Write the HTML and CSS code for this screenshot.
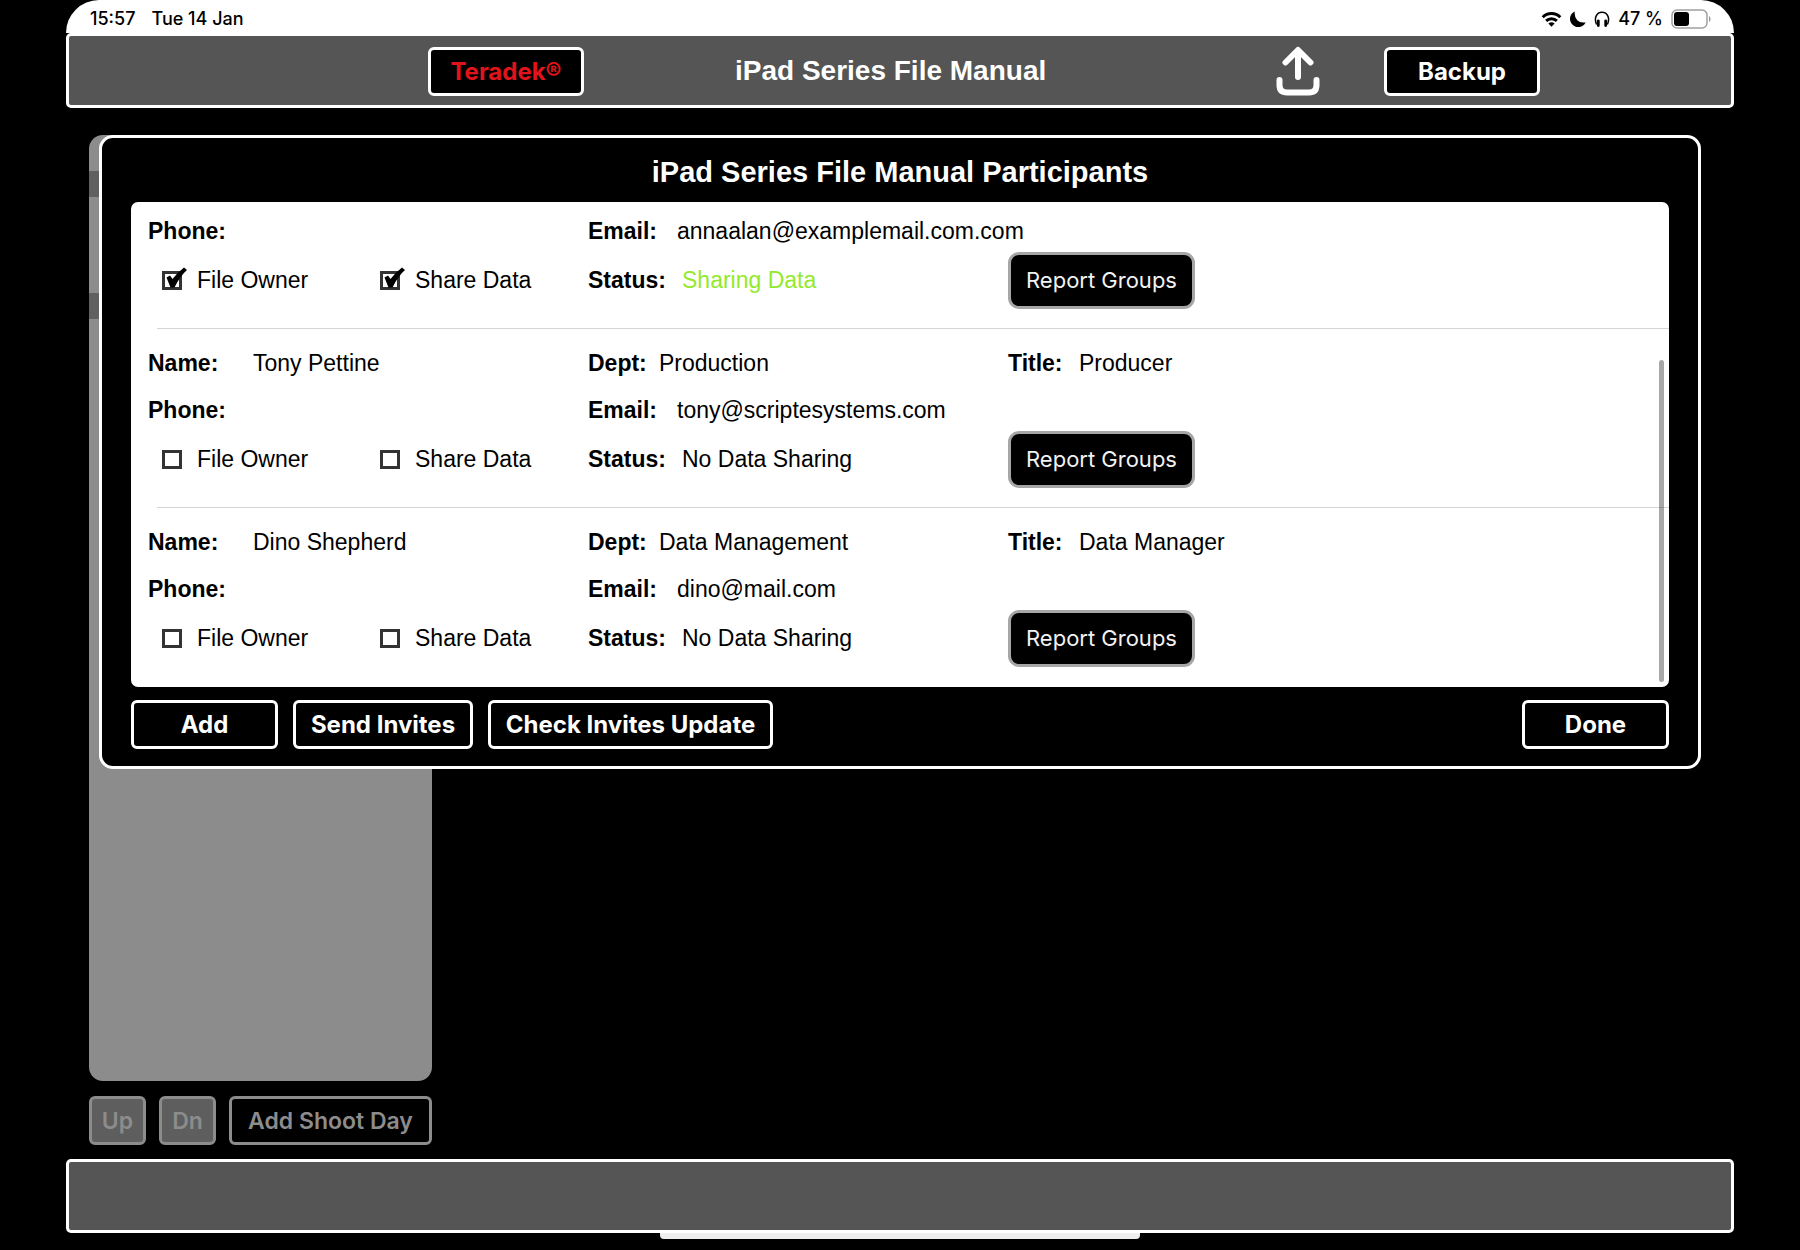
FILE: index.html
```html
<!DOCTYPE html>
<html lang="en">
<head>
    <meta charset="UTF-8">
    <meta name="viewport" content="width=device-width, initial-scale=1.0">
    <title>iPad Series File Manual</title>
    <link rel="stylesheet" href="styles.css">
</head>
<body>
    <div class="status-bar">
        <span class="time">15:57</span>
        <span class="date">Tue 14 Jan</span>
        <div class="status-icons">
            <svg width="21" height="16" viewBox="0 0 20 16" fill="none" stroke="#000" stroke-width="3">
                <path d="M1.2 6.2a12.5 12.5 0 0 1 17.6 0"/>
                <path d="M4.6 9.9a7.7 7.7 0 0 1 10.8 0"/>
                <path d="M10 15.8 6.9 12.6a4.5 4.5 0 0 1 6.2 0z" fill="#000" stroke="none"/>
            </svg>
            <svg width="16" height="16" viewBox="0 0 16 16">
                <path d="M4.800 .4A8.200 8.200 0 1 0 15.600 11.400 Q10 12.200 7.200 9.200 Q4 5.500 4.800 .4z"/>
            </svg>
            <svg width="16" height="16" viewBox="0 0 16 16" fill="none" stroke="#000">
                <path d="M2.600 13.500C-.2 7.500 2.300 1.300 8 1.300s8.200 6.200 5.400 12.200" stroke-width="1.500"/>
                <path d="M4.300 9.800v4.700M11.700 9.800v4.700" stroke-width="2.800" stroke-linecap="round"/>
            </svg>
            <span class="percent">47 %</span>
            <svg width="40" height="20" viewBox="0 0 40 20">
                <rect x="1" y="1" width="35" height="18" rx="5" fill="none" stroke="#a0a0a0" stroke-width="1.500"/>
                <rect x="3" y="3" width="15" height="14" rx="3"/>
                <path d="M38 7c2 1 2 5 0 6z" fill="#999"/>
            </svg>
        </div>
    </div>

    <header class="header">
        <button type="button" class="btn btn-teradek">Teradek®</button>
        <h1>iPad Series File Manual</h1>
        <button type="button" class="share-btn" aria-label="Share">
            <svg width="44" height="50" viewBox="0 0 44 50" fill="none" stroke="#fff" stroke-width="6" stroke-linecap="round" stroke-linejoin="round">
                <path d="M22 31V5M9.500 16.500 22 4l12.500 12.500"/>
                <path d="M3.500 34v5q0 7.500 7.500 7.500h22q7.500 0 7.500-7.500v-5"/>
            </svg>
        </button>
        <button type="button" class="btn btn-backup">Backup</button>
    </header>

    <main class="workspace">
        <aside class="sidebar">
            <div class="day-list">
                <div class="day-row"></div>
                <div class="day-row"></div>
            </div>
            <div class="sidebar-actions">
                <button type="button" class="btn btn-dim btn-move" disabled>Up</button>
                <button type="button" class="btn btn-dim btn-move" disabled>Dn</button>
                <button type="button" class="btn btn-dim btn-day">Add Shoot Day</button>
            </div>
        </aside>

        <section class="modal" role="dialog" aria-labelledby="modalTitle">
            <h2 id="modalTitle">iPad Series File Manual Participants</h2>

            <ul class="participants">
                <li>
                    <div class="fields fields-short">
                        <div class="field"><b>Phone:</b></div>
                        <div class="field wide"><b class="w-email">Email:</b>annaalan@examplemail.com.com</div>
                        <div class="checks">
                            <label><input type="checkbox" checked>File Owner</label>
                            <label><input type="checkbox" checked>Share Data</label>
                        </div>
                        <div class="field"><b class="w-status">Status:</b><span class="sharing">Sharing Data</span></div>
                        <button type="button" class="report-btn">Report Groups</button>
                    </div>
                </li>
                <li>
                    <div class="fields">
                        <div class="field"><b class="w-name">Name:</b>Tony Pettine</div>
                        <div class="field"><b class="w-dept">Dept:</b>Production</div>
                        <div class="field"><b class="w-dept">Title:</b>Producer</div>
                        <div class="field"><b>Phone:</b></div>
                        <div class="field wide"><b class="w-email">Email:</b>tony@scriptesystems.com</div>
                        <div class="checks">
                            <label><input type="checkbox">File Owner</label>
                            <label><input type="checkbox">Share Data</label>
                        </div>
                        <div class="field"><b class="w-status">Status:</b>No Data Sharing</div>
                        <button type="button" class="report-btn">Report Groups</button>
                    </div>
                </li>
                <li>
                    <div class="fields">
                        <div class="field"><b class="w-name">Name:</b>Dino Shepherd</div>
                        <div class="field"><b class="w-dept">Dept:</b>Data Management</div>
                        <div class="field"><b class="w-dept">Title:</b>Data Manager</div>
                        <div class="field"><b>Phone:</b></div>
                        <div class="field wide"><b class="w-email">Email:</b>dino@mail.com</div>
                        <div class="checks">
                            <label><input type="checkbox">File Owner</label>
                            <label><input type="checkbox">Share Data</label>
                        </div>
                        <div class="field"><b class="w-status">Status:</b>No Data Sharing</div>
                        <button type="button" class="report-btn">Report Groups</button>
                    </div>
                </li>
            </ul>

            <div class="modal-actions">
                <button type="button" class="btn btn-small">Add</button>
                <button type="button" class="btn btn-invites">Send Invites</button>
                <button type="button" class="btn btn-update">Check Invites Update</button>
                <button type="button" class="btn btn-small btn-done">Done</button>
            </div>
        </section>
    </main>

    <footer class="footer"></footer>
    <div class="home-indicator"></div>
</body>
</html>
```

FILE: styles.css
```css
* {
    margin: 0;
    padding: 0;
    box-sizing: border-box;
}

body {
    font-family: 'Liberation Sans', Arial, sans-serif;
    font-size: 23px;
    background: #000;
    color: #000;
    min-height: 100vh;
    padding: 0 66px 11px;
    display: flex;
    flex-direction: column;
}

/* Status bar */

.status-bar {
    height: 33px;
    padding: 4px 23px 0 24px;
    display: flex;
    align-items: center;
    gap: 16px;
    background: #fff;
    border-radius: 38px 38px 0 0;
    font-family: Inter, sans-serif;
    font-size: 18px;
    font-weight: 500;
}

.status-icons {
    margin-left: auto;
    display: flex;
    align-items: center;
    gap: 8px;
}

/* Top and bottom bars */

.header {
    height: 75px;
    padding-top: 1px;
    display: grid;
    grid-template-columns: 359fr 156px 151fr 306px 235fr 44px 64fr 156px 191fr;
    align-items: center;
    background: #555;
    border: 3px solid #fff;
    border-radius: 5px;
}

.header h1 {
    grid-column: 4;
    font-size: 28px;
    line-height: 32px;
    color: #fff;
    text-align: center;
    white-space: nowrap;
}

.share-btn {
    grid-column: 6;
    height: 50px;
    background: none;
    border: none;
}

.btn-teradek {
    grid-column: 2;
}

.btn-backup {
    grid-column: 8;
}

.footer {
    height: 74px;
    background: #555;
    border: 3px solid #fff;
    border-radius: 5px;
}

.home-indicator {
    width: 480px;
    height: 6px;
    align-self: center;
    background: #eee;
    border-radius: 0 0 4px 4px;
}

/* Buttons */

.btn {
    height: 49px;
    background: #000;
    color: #fff;
    border: 3px solid #fff;
    border-radius: 6px;
    font-family: Inter, sans-serif;
    font-size: 24px;
    font-weight: 700;
    white-space: nowrap;
}

.header .btn-teradek {
    color: #e0141a;
}

.btn-dim {
    color: #8c8c8c;
    border-color: #8c8c8c;
    font-size: 23px;
    font-weight: 600;
}

.btn-dim:disabled {
    background: #5e5e5e;
}

.btn-move {
    width: 57px;
}

.btn-day {
    flex: 1;
}

.btn-small {
    width: 147px;
}

.btn-invites {
    width: 180px;
}

.btn-update {
    width: 285px;
}

.btn-done {
    margin-left: auto;
}

/* Sidebar */

.workspace {
    position: relative;
    flex: 1;
    display: flex;
    padding: 27px 23px 14px;
}

.sidebar {
    width: 343px;
    display: flex;
    flex-direction: column;
    gap: 15px;
}

.day-list {
    flex: 1;
    padding-top: 36px;
    display: flex;
    flex-direction: column;
    gap: 96px;
    background: #8c8c8c;
    border-radius: 14px;
}

.day-row {
    height: 26px;
    background: #606060;
}

.sidebar-actions {
    display: flex;
    gap: 13px;
}

/* Participants dialog */

.modal {
    position: absolute;
    top: 27px;
    left: 33px;
    right: 33px;
    padding: 18px 29px 17px;
    background: #000;
    border: 3px solid #fff;
    border-radius: 14px;
}

.modal h2 {
    margin-bottom: 14px;
    font-size: 29px;
    line-height: 32px;
    color: #fff;
    text-align: center;
}

.participants {
    position: relative;
    padding-bottom: 1px;
    background: #fff;
    border-radius: 7px;
    list-style: none;
}

/* scroll thumb */
.participants::after {
    content: '';
    position: absolute;
    right: 5px;
    bottom: 5px;
    width: 5px;
    height: 322px;
    background: rgba(0, 0, 0, 0.34);
    border-radius: 3px;
}

.participants li {
    margin-left: 26px;
    border-bottom: 1px solid #d4d4d4;
}

.participants li:last-child {
    border-bottom: none;
}

.fields {
    margin-left: -9px;
    padding: 11px 0 23px;
    display: grid;
    grid-template-columns: 440px 420px 1fr;
    grid-template-rows: 47px 47px 50px;
    align-items: center;
}

.fields-short {
    padding-top: 5px;
    grid-template-rows: 48px 50px;
}

.field {
    display: flex;
    white-space: nowrap;
}

.wide {
    grid-column: span 2;
}

.w-name {
    width: 105px;
}

.w-dept {
    width: 71px;
}

.w-email {
    width: 89px;
}

.w-status {
    width: 94px;
}

.sharing {
    color: #93ea2c;
}

.checks {
    display: flex;
    padding-left: 13px;
}

.checks label {
    width: 218px;
    flex-shrink: 0;
    display: flex;
    align-items: center;
    gap: 10px;
}

.checks input {
    appearance: none;
    width: 26px;
    height: 26px;
    background: url("data:image/svg+xml,%3Csvg xmlns='http://www.w3.org/2000/svg' viewBox='0 0 26 26'%3E%3Crect x='2.500' y='5.500' width='17' height='16' fill='none' stroke='%23333' stroke-width='3'/%3E%3C/svg%3E");
}

.checks input:checked {
    background: url("data:image/svg+xml,%3Csvg xmlns='http://www.w3.org/2000/svg' viewBox='0 0 26 26'%3E%3Crect x='2.500' y='5.500' width='17' height='16' fill='none' stroke='%23333' stroke-width='3'/%3E%3Cpath d='M5.500 10.500 9 8.500 11.500 12 Q17 5 23 .5 L26 3 Q19 9 13.500 20.500 L9.500 20.500z' fill='%23000'/%3E%3C/svg%3E");
}

.report-btn {
    width: 187px;
    height: 57px;
    margin: -4px 0;
    background: #000;
    color: #f2f2f2;
    border: 3px solid #a6a6a6;
    border-radius: 11px;
    font-family: Inter, sans-serif;
    font-size: 22px;
    white-space: nowrap;
}

.modal-actions {
    margin-top: 13px;
    display: flex;
    gap: 15px;
}
```
